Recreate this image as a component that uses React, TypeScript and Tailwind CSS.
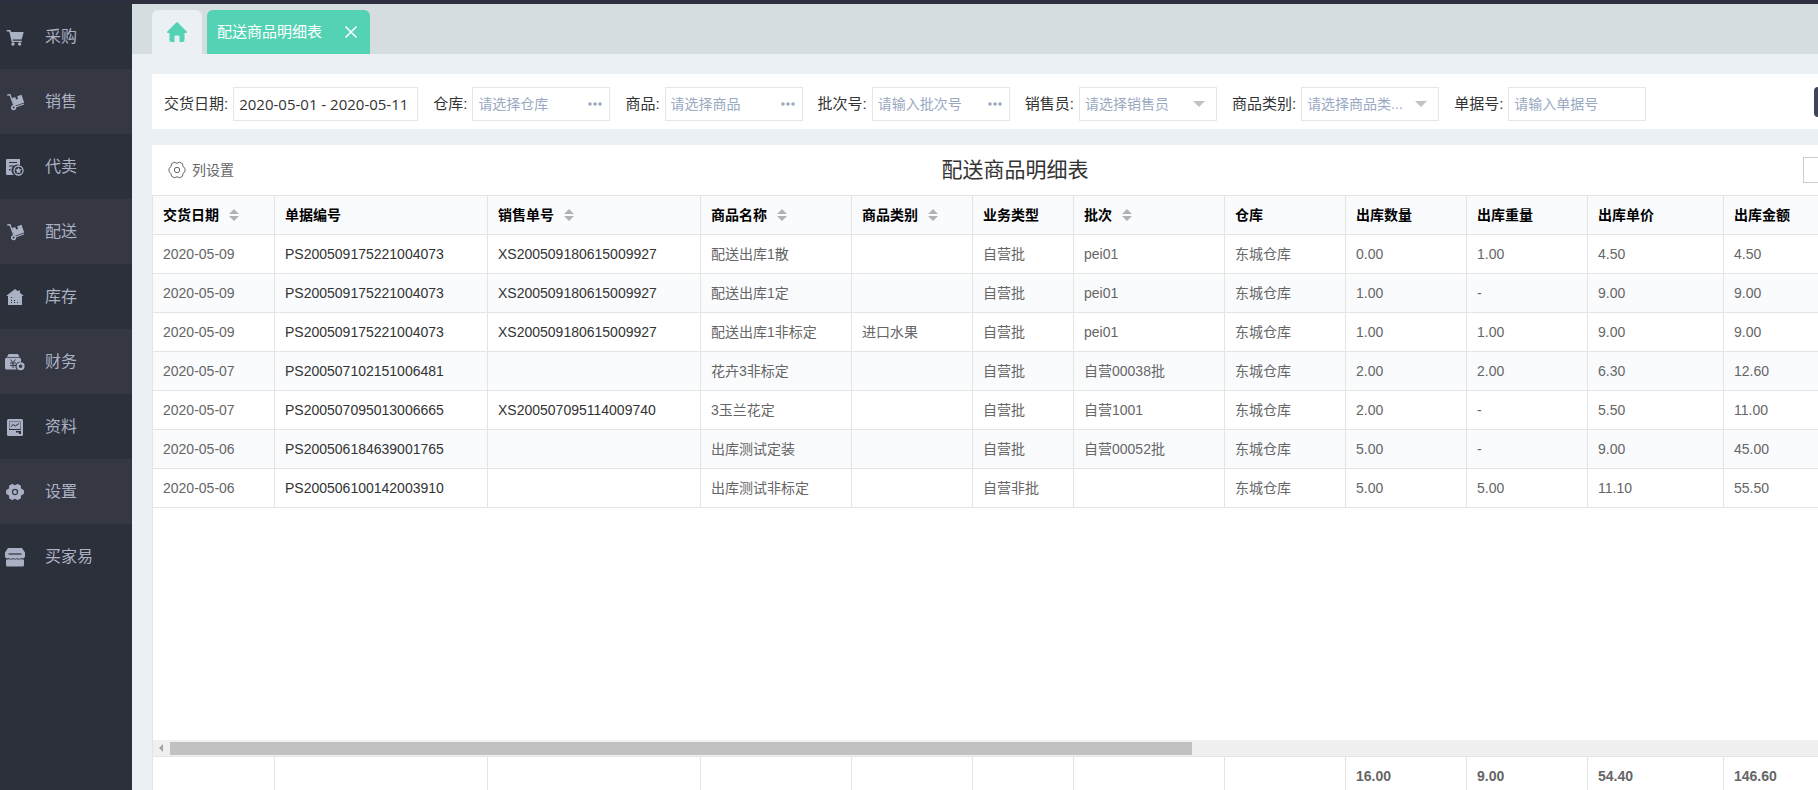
import type { ReactNode } from 'react';

interface MenuItem {
  label: string;
  icon: ReactNode;
}

interface Column {
  title: string;
  width: string;
  sortable?: boolean;
  dark?: boolean;
}

const CartIcon = () => (
  <svg viewBox="0 0 20 20" className="size-5" fill="currentColor">
    <path d="M1.800 3h3.600l.8 2h12.500l-2 7.500H7.600l.4 1.300h8.900v1.300H6.700L4.300 4.600H1.800z" />
    <circle cx="8" cy="17" r="1.700" />
    <circle cx="14.600" cy="17" r="1.700" />
  </svg>
);

const TrolleyIcon = () => (
  <svg viewBox="0 0 20 20" className="size-5" fill="currentColor">
    <path d="M2.200 2.300l3.300-.3 3.900 11-1.200.4L4.600 3.500l-2.200.3z" />
    <path d="M6.800 6.200l3.400-1.200.9 2.400 2-.7-.9-2.400 4.300-1.500 2.700 7.600-9.700 3.500z" />
    <path d="M10.400 14.500l8.300-3 .4 1.100-8.400 3z" />
    <path fillRule="evenodd" d="M8.600 13a2.600 2.600 0 1 1 0 5.200 2.600 2.600 0 0 1 0-5.200zm0 1.600a1 1 0 1 0 0 2 1 1 0 0 0 0-2z" />
  </svg>
);

const ConsignIcon = () => (
  <svg viewBox="0 0 20 20" className="size-5">
    <path fill="currentColor" d="M2 2h13v6.500a5.300 5.300 0 0 0-6 9.500H2a1 1 0 0 1-1-1V3a1 1 0 0 1 1-1z" />
    <path stroke="#2c303a" strokeWidth="1.200" d="M4 5.500h8M4 9h5" />
    <path fill="#2c303a" d="M4 12h1.500v1.500H4z" />
    <circle cx="13.500" cy="13.500" r="4.500" fill="none" stroke="currentColor" strokeWidth="1.300" />
    <path fill="currentColor" d="M13.500 10.200l1 2.100 2.300.3-1.700 1.600.4 2.300-2-1.100-2 1.100.4-2.300-1.700-1.600 2.300-.3z" />
  </svg>
);

const StockIcon = () => (
  <svg viewBox="0 0 20 20" className="size-5">
    <path fill="currentColor" d="M10 2l8.300 6.500V9H17v9H3V9H1.700v-.5z" />
    <path fill="currentColor" d="M13 3.500h2V8h-2z" />
    <path fill="#2c303a" d="M6 10h1v1H6zM6 13h1v1H6zM9 13h1v1H9zM6 15h1v1H6zM9 15h1v1H9zM12 15h1v1h-1z" />
  </svg>
);

const FinanceIcon = () => (
  <svg viewBox="0 0 20 20" className="size-5">
    <path fill="currentColor" d="M3.500 2h9.500l1.500 3H2zM1.500 5.700h13A1.500 1.500 0 0 1 16 7.200v2.700a4.500 4.500 0 0 0-4.200 7.600H1.500A1.500 1.500 0 0 1 0 16V7.200a1.500 1.500 0 0 1 1.500-1.500z" />
    <path fill="none" stroke="#353843" d="M5.500 7.500L8 10.700l2.500-3.200M8 10.700V16M5 11h6M5 13.400h6" />
    <circle cx="15.600" cy="14.300" r="2.900" fill="none" stroke="currentColor" strokeWidth="2.200" />
  </svg>
);

const RecordIcon = () => (
  <svg viewBox="0 0 20 20" className="size-5">
    <rect x="2" y="2" width="16" height="17" rx="1.500" fill="currentColor" />
    <path fill="none" stroke="#2c303a" strokeWidth=".8" opacity=".5" d="M4.500 12V4.500h11V12" />
    <path fill="none" stroke="#2c303a" d="M6 9.500l2.200-2 2.200 1.500L14 6.500" />
    <path fill="#2c303a" d="M4 12h12v1H4zM11 14h5v3h-2v-1.500h-3z" />
  </svg>
);

const SettingsIcon = () => (
  <svg viewBox="0 0 20 20" className="size-5">
    <path
      fill="currentColor"
      stroke="currentColor"
      strokeWidth="1.200"
      strokeLinejoin="round"
      fillRule="evenodd"
      d="M7.300 2.500L10 4l2.700-1.500 2.600 1.500v2.800L18.300 8.500v3l-3 1.700V16l-2.600 1.500L10 16l-2.700 1.500L4.700 16v-2.800l-3-1.700v-3l3-1.700V4zM10 6.200a3.800 3.800 0 1 0 0 7.600 3.800 3.800 0 0 0 0-7.600z"
    />
    <circle cx="10" cy="10" r="1.900" fill="currentColor" />
  </svg>
);

const ShopIcon = () => (
  <svg viewBox="0 0 20 20" className="size-5">
    <path fill="currentColor" d="M3 1h14l3 4.500v4.300a2.500 2.500 0 0 1-3.700 1.200 3.300 3.300 0 0 1-4.200 0 3.300 3.300 0 0 1-4.200 0 3.300 3.300 0 0 1-4.200 0A2.500 2.500 0 0 1 0 9.800V5.500z" />
    <path fill="currentColor" d="M1 12.500a4 4 0 0 0 3-.5 4.400 4.400 0 0 0 4 0 4.400 4.400 0 0 0 4 0 4.400 4.400 0 0 0 4 0 4 4 0 0 0 3 .5V18a1.500 1.500 0 0 1-1.500 1.500h-15A1.500 1.500 0 0 1 1 18z" />
    <path stroke="#2c303a" strokeWidth="1.200" d="M3.500 7h13" />
  </svg>
);

const HomeIcon = () => (
  <svg viewBox="0 0 20 20" className="size-5" fill="currentColor">
    <path d="M9.300.4a1 1 0 0 1 1.400 0l9 9c.6.600.3 1.600-.6 1.600H17.500v7a2 2 0 0 1-2 2H12.500v-5.500a1 1 0 0 0-1-1h-3a1 1 0 0 0-1 1V20H4.500a2 2 0 0 1-2-2v-7H.9C0 11-.3 10 .3 9.400z" />
  </svg>
);

const ColumnGearIcon = () => (
  <svg viewBox="0 0 18 18" className="size-[18px]" fill="none" stroke="currentColor" strokeLinejoin="round">
    <path d="M6.300 1.200Q9 3.300 11.700 1.200L14.500 2.800Q14.200 6 17 7.400V10.600Q14.200 12 14.500 15.200L11.700 16.800Q9 14.700 6.300 16.800L3.500 15.200Q3.800 12 1 10.600V7.400Q3.800 6 3.500 2.800z" />
    <circle cx="9" cy="9" r="2.700" />
  </svg>
);

const SortIcon = () => (
  <svg viewBox="0 0 10 12" className="h-3 w-2.5" fill="#b2b2b2">
    <path d="M5 0l5 5H0zM0 7h10l-5 5z" />
  </svg>
);

const menuItems: MenuItem[] = [
  { label: '采购', icon: <CartIcon /> },
  { label: '销售', icon: <TrolleyIcon /> },
  { label: '代卖', icon: <ConsignIcon /> },
  { label: '配送', icon: <TrolleyIcon /> },
  { label: '库存', icon: <StockIcon /> },
  { label: '财务', icon: <FinanceIcon /> },
  { label: '资料', icon: <RecordIcon /> },
  { label: '设置', icon: <SettingsIcon /> },
  { label: '买家易', icon: <ShopIcon /> },
];

const columns: Column[] = [
  { title: '交货日期', width: 'w-[122px]', sortable: true },
  { title: '单据编号', width: 'w-[213px]', dark: true },
  { title: '销售单号', width: 'w-[213px]', sortable: true, dark: true },
  { title: '商品名称', width: 'w-[151px]', sortable: true },
  { title: '商品类别', width: 'w-[121px]', sortable: true },
  { title: '业务类型', width: 'w-[101px]' },
  { title: '批次', width: 'w-[151px]', sortable: true },
  { title: '仓库', width: 'w-[121px]' },
  { title: '出库数量', width: 'w-[121px]' },
  { title: '出库重量', width: 'w-[121px]' },
  { title: '出库单价', width: 'w-[136px]' },
  { title: '出库金额', width: '' },
];

const rows: string[][] = [
  ['2020-05-09', 'PS200509175221004073', 'XS200509180615009927', '配送出库1散', '', '自营批', 'pei01', '东城仓库', '0.00', '1.00', '4.50', '4.50'],
  ['2020-05-09', 'PS200509175221004073', 'XS200509180615009927', '配送出库1定', '', '自营批', 'pei01', '东城仓库', '1.00', '-', '9.00', '9.00'],
  ['2020-05-09', 'PS200509175221004073', 'XS200509180615009927', '配送出库1非标定', '进口水果', '自营批', 'pei01', '东城仓库', '1.00', '1.00', '9.00', '9.00'],
  ['2020-05-07', 'PS200507102151006481', '', '花卉3非标定', '', '自营批', '自营00038批', '东城仓库', '2.00', '2.00', '6.30', '12.60'],
  ['2020-05-07', 'PS200507095013006665', 'XS200507095114009740', '3玉兰花定', '', '自营批', '自营1001', '东城仓库', '2.00', '-', '5.50', '11.00'],
  ['2020-05-06', 'PS200506184639001765', '', '出库测试定装', '', '自营批', '自营00052批', '东城仓库', '5.00', '-', '9.00', '45.00'],
  ['2020-05-06', 'PS200506100142003910', '', '出库测试非标定', '', '自营非批', '', '东城仓库', '5.00', '5.00', '11.10', '55.50'],
];

const totals = ['', '', '', '', '', '', '', '', '16.00', '9.00', '54.40', '146.60'];

const ColGroup = () => (
  <colgroup>
    {columns.map((col) => (
      <col key={col.title} className={col.width} />
    ))}
  </colgroup>
);

const fieldClass = 'h-[34px] w-[138px] border border-[#e6e6e6] bg-white pl-[5px] text-sm outline-none';
const inputClass = `${fieldClass} text-[#333] placeholder:text-[#9aa9c2]`;

const Field = ({ id, label, children }: { id: string; label: string; children: ReactNode }) => (
  <div className="flex shrink-0 items-center gap-[5px]">
    <label htmlFor={id} className="text-[15px] text-[#333]">
      {label}:
    </label>
    {children}
  </div>
);

const PickerField = ({ id, label, placeholder }: { id: string; label: string; placeholder: string }) => (
  <Field id={id} label={label}>
    <div className="relative flex">
      <input id={id} type="text" placeholder={placeholder} className={`${inputClass} pr-7`} />
      <button type="button" aria-label={`选择${label}`} className="absolute inset-y-0 right-2 text-[#9aa9c2]">
        <svg viewBox="0 0 14 4" className="h-1 w-3.5" fill="currentColor">
          <circle cx="2" cy="2" r="1.800" />
          <circle cx="7" cy="2" r="1.800" />
          <circle cx="12" cy="2" r="1.800" />
        </svg>
      </button>
    </div>
  </Field>
);

const SelectField = ({ id, label, placeholder }: { id: string; label: string; placeholder: string }) => (
  <Field id={id} label={label}>
    <div className="relative flex items-center">
      <select id={id} className={`${fieldClass} appearance-none overflow-hidden pr-8 text-ellipsis whitespace-nowrap text-[#9aa9c2]`}>
        <option>{placeholder}</option>
      </select>
      <svg viewBox="0 0 12 6" className="pointer-events-none absolute right-3 h-1.5 w-3" fill="#c2c2c2">
        <path d="M0 0h12L6 6z" />
      </svg>
    </div>
  </Field>
);

const Sidebar = () => (
  <nav className="w-[132px] shrink-0 bg-[#2c303a]">
    {menuItems.map((item) => (
      <a
        key={item.label}
        href="#"
        className="flex h-[65px] items-center gap-5 pl-[5px] text-base text-[#abb1c5] even:bg-[#353843]"
      >
        {item.icon}
        {item.label}
      </a>
    ))}
  </nav>
);

const TabBar = () => (
  <div className="flex h-[50px] items-end gap-[5px] bg-[#d5dde0] pl-5">
    <button type="button" aria-label="首页" className="flex h-11 w-[50px] items-center justify-center rounded-t-md bg-[#ebf0f5] text-[#53d2b4]">
      <HomeIcon />
    </button>
    <div className="flex h-11 w-[163px] items-center justify-between rounded-t-md bg-[#53d2b4] pr-3 pl-2.5 text-white">
      <a href="#" className="text-[15px]">配送商品明细表</a>
      <button type="button" aria-label="关闭">
        <svg viewBox="0 0 14 14" className="size-3.5" stroke="currentColor" strokeWidth="1.600">
          <path d="M1.500 1.500l11 11M12.500 1.500l-11 11" />
        </svg>
      </button>
    </div>
  </div>
);

const FilterBar = () => (
  <div className="flex items-start gap-[15px] bg-white pt-[13px] pr-[10px] pb-2 pl-3">
    <Field id="date" label="交货日期">
      <input
        id="date"
        type="text"
        defaultValue="2020-05-01 - 2020-05-11"
        className="h-[34px] w-[185px] border border-[#e6e6e6] pl-[5px] font-['Open_Sans','Noto_Sans_CJK_SC',sans-serif] text-[15px] text-[#333] outline-none"
      />
    </Field>
    <PickerField id="warehouse" label="仓库" placeholder="请选择仓库" />
    <PickerField id="goods" label="商品" placeholder="请选择商品" />
    <PickerField id="batch" label="批次号" placeholder="请输入批次号" />
    <SelectField id="seller" label="销售员" placeholder="请选择销售员" />
    <SelectField id="category" label="商品类别" placeholder="请选择商品类..." />
    <Field id="bill" label="单据号">
      <input id="bill" type="text" placeholder="请输入单据号" className={inputClass} />
    </Field>
    <button type="button" aria-label="查询" className="ml-auto h-[30px] w-[54px] rounded-sm bg-[#3f4457]" />
  </div>
);

const DetailTable = () => (
  <div className="flex min-h-0 flex-1 flex-col bg-white">
    {/* Toolbar */}
    <div className="grid h-[50px] shrink-0 grid-cols-3 items-center px-4">
      <button type="button" className="flex items-center gap-1.5 text-sm text-[#666]">
        <ColumnGearIcon />
        列设置
      </button>
      <h1 className="text-center text-[21px] text-[#333]">配送商品明细表</h1>
      <button type="button" aria-label="导出" className="h-[26px] w-[59px] justify-self-end border border-[#ccc]" />
    </div>

    {/* Rows */}
    <div className="flex min-h-0 flex-1 flex-col border-t border-l border-[#e4e4e4]">
      <div className="min-h-0 flex-1 overflow-hidden">
        <table className="w-full table-fixed border-separate border-spacing-0 text-left text-sm text-[#666]">
          <ColGroup />
          <thead>
            <tr className="h-[39px] bg-[#fafbfd] text-black">
              {columns.map((col) => (
                <th key={col.title} className="border-r border-b border-[#e4e4e4] px-2.5 py-0 font-bold">
                  <div className="flex items-center gap-2.5">
                    {col.title}
                    {col.sortable && (
                      <button type="button" aria-label={`${col.title}排序`}>
                        <SortIcon />
                      </button>
                    )}
                  </div>
                </th>
              ))}
            </tr>
          </thead>
          <tbody>
            {rows.map((row) => (
              <tr key={row[1] + row[3]} className="h-[39px] even:bg-[#fafbfd]">
                {row.map((cell, i) => (
                  <td
                    key={columns[i].title}
                    className={`border-r border-b border-[#e4e4e4] px-2.5 py-0 ${columns[i].dark ? 'text-[#333]' : ''}`}
                  >
                    {cell}
                  </td>
                ))}
              </tr>
            ))}
          </tbody>
        </table>
      </div>

      {/* Horizontal scrollbar */}
      <div className="flex h-4 shrink-0 items-center bg-[#f0f0f0]">
        <svg viewBox="0 0 17 8" className="h-2 w-[17px]" fill="#a3a3a3">
          <path d="M10 0v8L6 4z" />
        </svg>
        <div className="h-[13px] w-[1022px] bg-[#c1c1c1]" />
      </div>

      {/* Totals */}
      <div className="h-[34px] shrink-0 overflow-hidden border-t border-[#e4e4e4]">
        <table className="w-full table-fixed border-separate border-spacing-0 text-left text-sm font-bold text-[#666]">
          <ColGroup />
          <tbody>
            <tr className="h-[37px]">
              {totals.map((cell, i) => (
                <td key={columns[i].title} className="border-r border-[#e4e4e4] px-2.5 py-0">
                  {cell}
                </td>
              ))}
            </tr>
          </tbody>
        </table>
      </div>
    </div>
  </div>
);

const App = () => {
  return (
    <div className="flex h-screen overflow-hidden border-t-4 border-[#2d2f3e] bg-[#ebf0f5] font-['Liberation_Sans','Noto_Sans_CJK_SC',sans-serif]">
      <Sidebar />
      <main className="flex min-w-0 flex-1 flex-col overflow-hidden">
        <TabBar />
        <div className="flex min-h-0 min-w-[1746px] flex-1 flex-col gap-4 pt-5 pl-5">
          <FilterBar />
          <DetailTable />
        </div>
      </main>
    </div>
  );
};

export default App;
